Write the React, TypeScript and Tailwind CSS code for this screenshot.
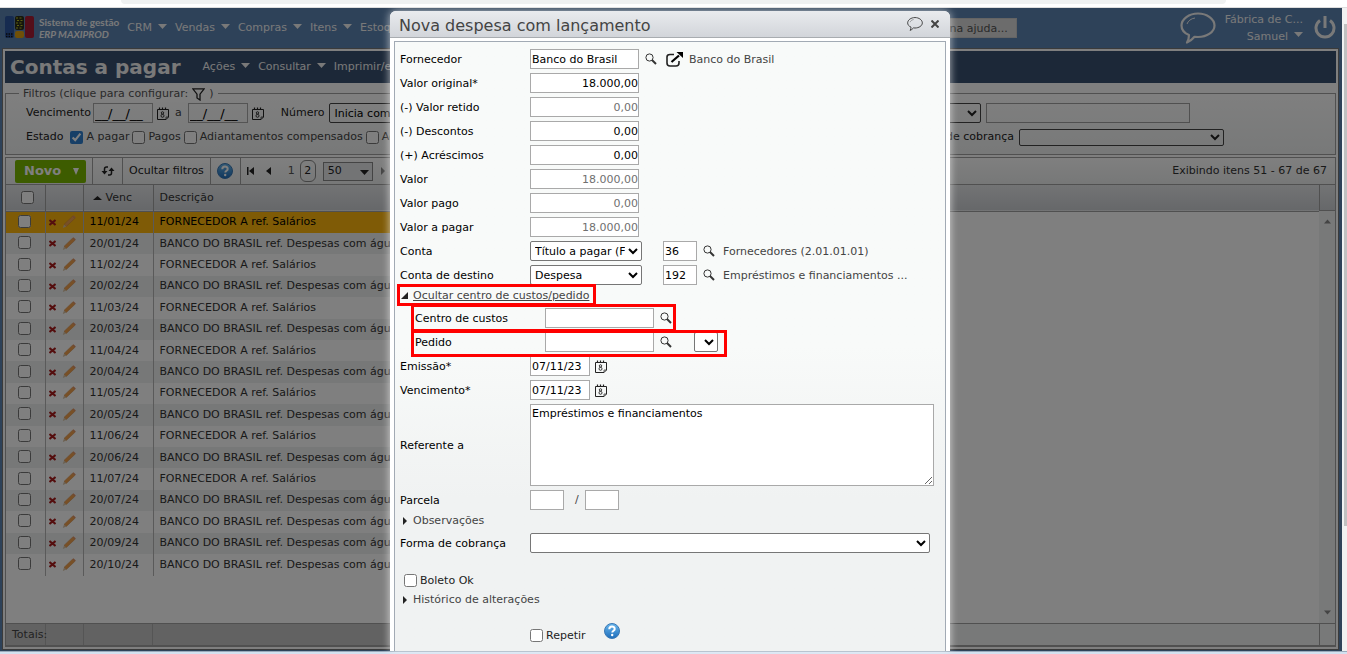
import {ReactNode} from 'react'
import clsx from 'clsx'

const rows = [
    {date: '11/01/24', text: 'FORNECEDOR A ref. Salários'},
    {date: '20/01/24', text: 'BANCO DO BRASIL ref. Despesas com água'},
    {date: '11/02/24', text: 'FORNECEDOR A ref. Salários'},
    {date: '20/02/24', text: 'BANCO DO BRASIL ref. Despesas com água'},
    {date: '11/03/24', text: 'FORNECEDOR A ref. Salários'},
    {date: '20/03/24', text: 'BANCO DO BRASIL ref. Despesas com água'},
    {date: '11/04/24', text: 'FORNECEDOR A ref. Salários'},
    {date: '20/04/24', text: 'BANCO DO BRASIL ref. Despesas com água'},
    {date: '11/05/24', text: 'FORNECEDOR A ref. Salários'},
    {date: '20/05/24', text: 'BANCO DO BRASIL ref. Despesas com água'},
    {date: '11/06/24', text: 'FORNECEDOR A ref. Salários'},
    {date: '20/06/24', text: 'BANCO DO BRASIL ref. Despesas com água'},
    {date: '11/07/24', text: 'FORNECEDOR A ref. Salários'},
    {date: '20/07/24', text: 'BANCO DO BRASIL ref. Despesas com água'},
    {date: '20/08/24', text: 'BANCO DO BRASIL ref. Despesas com água'},
    {date: '20/09/24', text: 'BANCO DO BRASIL ref. Despesas com água'},
    {date: '20/10/24', text: 'BANCO DO BRASIL ref. Despesas com água'},
]

const amounts = [
    {id: 'original', label: 'Valor original*', value: '18.000,00'},
    {id: 'retido', label: '(-) Valor retido', value: '0,00', disabled: true},
    {id: 'descontos', label: '(-) Descontos', value: '0,00'},
    {id: 'acrescimos', label: '(+) Acréscimos', value: '0,00'},
    {id: 'valor', label: 'Valor', value: '18.000,00', disabled: true},
    {id: 'pago', label: 'Valor pago', value: '0,00', disabled: true},
    {id: 'a-pagar', label: 'Valor a pagar', value: '18.000,00', disabled: true},
]

const inputClass = 'h-5 shrink-0 border border-[#a9a9a9] bg-white px-px text-black'
const selectClass = 'h-5 shrink-0 rounded-xs border border-[#767676] bg-white text-black'

function SearchIcon() {
    return (
        <svg width="12" height="12" viewBox="0 0 12 12" fill="none" aria-hidden="true">
            <circle cx="4.5" cy="4.5" r="3.6" stroke="#333" strokeWidth="1"/>
            <path d="M7 7l4 4" stroke="#333" strokeWidth="2"/>
        </svg>
    )
}

function CalendarIcon() {
    return (
        <svg width="12" height="13" viewBox="0 0 12 13" fill="none" stroke="#222" aria-hidden="true">
            <path d="M.5 2.500h11v7.500l-2.500 2.500H.5z"/>
            <path d="M2.500.5v2M5.500.5v2M8.500.5v2" strokeWidth="1.200"/>
            <path d="M9 12.500V10h2.500" strokeWidth=".7"/>
            <circle cx="5.500" cy="5.900" r="1.200" strokeWidth=".9"/>
            <circle cx="5.500" cy="8.800" r="1.500" strokeWidth=".9"/>
        </svg>
    )
}

function HelpIcon() {
    return (
        <svg width="16" height="16" viewBox="0 0 16 16" aria-hidden="true">
            <defs>
                <linearGradient id="help" x1="0" y1="0" x2="0" y2="1">
                    <stop offset="0" stopColor="#6ab8ee"/>
                    <stop offset="1" stopColor="#1d6cba"/>
                </linearGradient>
            </defs>
            <circle cx="8" cy="8" r="7.5" fill="url(#help)" stroke="#3a78b4"/>
            <path d="M5.300 6.200c0-3.400 5.400-3.400 5.400-.3 0 1.900-2.400 1.800-2.400 3.600" fill="none" stroke="#fff" strokeWidth="2"/>
            <circle cx="8.200" cy="12" r="1.200" fill="#fff"/>
        </svg>
    )
}

function BubbleIcon({className}: {className: string}) {
    return (
        <svg className={className} viewBox="0 0 36 32" fill="none" aria-hidden="true">
            <path d="M9 23C4 21 1.500 17.500 1.500 13.500 1.500 7 9 1.500 18 1.500s16.500 5.500 16.500 12S27 25 18 25l-3.500-.2Q11 29 7 30.500 9 27 9 23z"
                stroke="currentColor" strokeWidth="2.200" strokeLinejoin="round"/>
            <path d="M7 12c1-3 4-5.500 8-6" stroke="currentColor" strokeWidth="1"/>
        </svg>
    )
}

function Caret({className}: {className?: string}) {
    return (
        <svg className={className} width="9" height="5" viewBox="0 0 9 5" fill="currentColor" aria-hidden="true">
            <path d="M0 0h9L4.500 5z"/>
        </svg>
    )
}

function PencilIcon() {
    return (
        <svg width="14" height="14" viewBox="0 0 14 14" aria-hidden="true">
            <path d="M10.500 1.200l2.300 2.300-8.500 8L2 9.400z" fill="#f0a04c" stroke="#c88040" strokeWidth=".5"/>
            <path d="M2 9.400L.8 13l3.500-1.500z" fill="#d8c0a0"/>
            <path d="M10.500 1.200l1-.9 2.300 2.200-1 1z" fill="#e09060"/>
        </svg>
    )
}

function Logo() {
    return (
        <svg width="30" height="24" viewBox="0 0 30 24" aria-hidden="true">
            <rect x="0" y="0" width="9" height="22" rx="2" fill="#2c56a0"/>
            <path d="M1 18h7M1 20.500h7" stroke="#111" strokeWidth="1.500" strokeDasharray="1.500 1"/>
            <rect x="10" y="0" width="9" height="14" rx="2" fill="#2a2c18"/>
            <path d="M11 2h7M12 4.500h7M11 7h7M12 9.500h6M11 12h7" stroke="#b8c020" strokeWidth="1" strokeDasharray="2 1.500"/>
            <rect x="10" y="15" width="9" height="7" rx="2" fill="#e0a010"/>
            <rect x="20" y="0" width="9" height="22" rx="2" fill="#a81c34"/>
        </svg>
    )
}

function Menu({children}: {children: ReactNode}) {
    return (
        <button type="button" className="flex items-center gap-[6px] whitespace-nowrap">
            {children}
            <Caret className="mb-1"/>
        </button>
    )
}

function Check({label, checked}: {label: string, checked?: boolean}) {
    return (
        <label className="flex items-center gap-[3px] whitespace-nowrap text-[#444]">
            <input type="checkbox" defaultChecked={checked} className="size-[13px] accent-[#2f7fce]"/>
            {label}
        </label>
    )
}

function TopBar() {
    return (
        <header className="flex h-10 items-center bg-[#5c84b2] text-[#f2f2f2]">
            <a href="#" className="flex items-center gap-1 pl-[5px]">
                <Logo/>
                <span className="font-[Lato,sans-serif] text-[10px] font-bold leading-[12px] whitespace-nowrap">
                    Sistema de gestão<br/><i>ERP MAXIPROD</i>
                </span>
            </a>
            <nav className="ml-2 flex min-w-0 flex-1 gap-2 overflow-hidden">
                <Menu>CRM</Menu>
                <Menu>Vendas</Menu>
                <Menu>Compras</Menu>
                <Menu>Itens</Menu>
                <Menu>Estoq</Menu>
            </nav>
            <input aria-label="Pesquisar na ajuda" placeholder="Pesquisar na ajuda..."
                className="h-5 w-[150px] border border-[#c8c8c8] bg-[#d8d8d8] pr-2 text-right placeholder:text-[#555]"/>
            <button type="button" aria-label="Mensagens" className="ml-[163px]">
                <BubbleIcon className="h-8 w-9"/>
            </button>
            <div className="ml-[9px] text-right leading-[17px]">
                <div>Fábrica de C...</div>
                <button type="button" className="inline-flex items-center gap-[6px]">Samuel <Caret className="mb-1"/></button>
            </div>
            <button type="button" aria-label="Sair" className="mr-[6px] ml-[11px]">
                <svg width="22" height="24" viewBox="0 0 22 24" fill="none" stroke="currentColor" strokeWidth="3" aria-hidden="true">
                    <path d="M6 4.500a9 9 0 1 0 10 0M11 0v12"/>
                </svg>
            </button>
        </header>
    )
}

function DateFilter({label}: {label: string}) {
    return (
        <>
            <input aria-label={label} defaultValue="__/__/__"
                className="h-5 w-[60px] border border-[#a9a9a9] bg-transparent px-px text-[13px] text-black"/>
            <button type="button" aria-label="Calendário" className="ml-1"><CalendarIcon/></button>
        </>
    )
}

function Filters() {
    return (
        <section className="pt-[10px] pb-[2px]">
            <div className="relative border border-[#a0a0a0] bg-linear-to-b from-white to-[#f0f2f2] pt-[9px] pb-[7px] pl-5">
                <button type="button" className="absolute -top-2 left-[13px] flex h-4 items-center bg-white px-1 whitespace-nowrap text-[#555]">
                    Filtros (clique para configurar:
                    <svg className="mx-1" width="13" height="13" viewBox="0 0 13 13" fill="none" stroke="#222" strokeWidth="1.300" aria-hidden="true">
                        <path d="M.8.8h11.400L8 6.200V12L5 10V6.200z"/>
                    </svg>
                    )
                </button>
                <div className="flex h-5 items-center">
                    <span className="mr-[2px]">Vencimento</span>
                    <DateFilter label="Vencimento de"/>
                    <span className="mx-[6px] text-[#444]">a</span>
                    <DateFilter label="Vencimento até"/>
                    <label htmlFor="numero" className="mr-[5px] ml-[17px]">Número</label>
                    <select id="numero" className="h-5 w-[120px] rounded-xs border border-[#444] bg-transparent text-black">
                        <option>Inicia com</option>
                    </select>
                    <span className="flex-1"/>
                    <select aria-label="Operador" className="h-5 w-[120px] rounded-xs border border-[#444] bg-transparent"/>
                    <input aria-label="Valor do filtro" className="mr-[145px] ml-[5px] h-5 w-[204px] border border-[#a0a0a0]"/>
                </div>
                <div className="mt-1 flex h-5 items-center gap-[3px]">
                    <span className="mr-1">Estado</span>
                    <Check label="A pagar" checked/>
                    <Check label="Pagos"/>
                    <Check label="Adiantamentos compensados"/>
                    <Check label="Ag"/>
                    <span className="flex-1"/>
                    <label htmlFor="forma-filtro" className="mr-[2px] whitespace-nowrap">Forma de cobrança</label>
                    <select id="forma-filtro" className="mr-[111px] h-[17px] w-[205px] rounded-xs border border-[#444] bg-transparent"/>
                </div>
            </div>
        </section>
    )
}

function Toolbar() {
    return (
        <div className="flex h-7 shrink-0 items-center border border-[#a0a0a0] bg-linear-to-b from-white to-[#eef0f0] pr-2">
            <button type="button" className="ml-[9px] flex h-[23px] w-[71px] items-center justify-between rounded-xs bg-[#7ab800] pr-[7px] pl-[9px] text-[13px] font-bold text-white">
                Novo
                <svg width="6" height="7" viewBox="0 0 6 7" fill="currentColor" aria-hidden="true"><path d="M0 0h6L3 7z"/></svg>
            </button>
            <button type="button" aria-label="Atualizar" className="ml-[6px] flex h-full w-[31px] items-center justify-center border-x border-[#a0a0a0]">
                <svg width="14" height="10" viewBox="0 0 14 10" fill="none" aria-hidden="true">
                    <path d="M7 1H5.500Q3.500 1 3.500 3v3M7 9h1.500q2 0 2-2V4" stroke="#222" strokeWidth="1.500"/>
                    <path d="M.5 5h6L3.500 8.500zM7.500 5h6L10.500 1.500z" fill="#222"/>
                </svg>
            </button>
            <button type="button" className="h-full border-r border-[#a0a0a0] px-[6px] whitespace-nowrap text-[#222]">Ocultar filtros</button>
            <button type="button" aria-label="Ajuda" className="flex h-full w-[30px] items-center justify-center border-r border-[#a0a0a0]">
                <HelpIcon/>
            </button>
            <button type="button" aria-label="Primeira página" className="ml-[6px]">
                <svg width="7" height="8" viewBox="0 0 7 8" fill="#222" aria-hidden="true"><path d="M0 0h1.500v8H0zM7 0v8L2 4z"/></svg>
            </button>
            <button type="button" aria-label="Página anterior" className="ml-3">
                <svg width="5" height="8" viewBox="0 0 5 8" fill="#222" aria-hidden="true"><path d="M5 0v8L0 4z"/></svg>
            </button>
            <button type="button" className="ml-[17px] text-[#555]">1</button>
            <button type="button" className="ml-[5px] h-[22px] w-4 rounded-md border border-[#888]">2</button>
            <div className="relative ml-[7px]">
                <select aria-label="Itens por página" className="block h-[19px] w-[50px] appearance-none border border-[#888] bg-[#e6e8ea] pl-1">
                    <option>50</option>
                </select>
                <Caret className="pointer-events-none absolute top-2 right-1"/>
            </div>
            <button type="button" aria-label="Próxima página" className="ml-2">
                <svg width="4" height="8" viewBox="0 0 4 8" fill="#888" aria-hidden="true"><path d="M0 0v8l4-4z"/></svg>
            </button>
            <span className="ml-auto whitespace-nowrap text-[#333]">Exibindo itens 51 - 67 de 67</span>
        </div>
    )
}

function Grid() {
    return (
        <div className="flex min-h-0 flex-1 flex-col border-x border-[#a0a0a0]">
            <div className="flex min-h-0 flex-1">
                <div className="min-w-0 flex-1 overflow-hidden">
                    <table className="w-full table-fixed border-collapse text-left text-[#333]">
                        <colgroup>
                            <col className="w-[39px]"/>
                            <col className="w-[38px]"/>
                            <col className="w-[70px]"/>
                            <col/>
                        </colgroup>
                        <thead>
                            <tr className="h-[26px] border-b border-[#a0a0a0] bg-linear-to-b from-[#e6e8ea] to-[#cdd0d4]">
                                <th className="border-r border-[#a0a0a0] pl-[5px] text-center">
                                    <input type="checkbox" aria-label="Selecionar todos" className="mx-auto block size-[13px]"/>
                                </th>
                                <th className="border-r border-[#a0a0a0]"/>
                                <th className="border-r border-[#a0a0a0] pl-[9px] font-normal">
                                    <span className="flex items-center gap-1">
                                        <svg width="9" height="4" viewBox="0 0 9 4" fill="#222" aria-hidden="true"><path d="M0 4h9L4.500 0z"/></svg>
                                        Venc
                                    </span>
                                </th>
                                <th className="pl-[6px] font-normal">Descrição</th>
                            </tr>
                        </thead>
                    </table>
                    <table className="h-[364px] w-3/5 table-fixed border-collapse text-left text-[#333]">
                        <colgroup>
                            <col className="w-[39px]"/>
                            <col className="w-[38px]"/>
                            <col className="w-[70px]"/>
                            <col/>
                        </colgroup>
                        <tbody>
                            {rows.map((row, i) => (
                                <tr key={row.date}
                                    className={clsx('whitespace-nowrap', i === 0 ? 'bg-[#ffb70c] text-black' : i % 2 ? 'bg-[#eff1f1]' : 'bg-white')}>
                                    <td className="border-r border-[#b4b4b4] pr-[2px] pb-[2px]">
                                        <input type="checkbox" aria-label={'Selecionar ' + row.date} className="mx-auto block size-[13px]"/>
                                    </td>
                                    <td className="border-r border-[#b4b4b4]">
                                        <div className="flex items-center gap-[6px] pl-[3px]">
                                            <button type="button" aria-label="Excluir">
                                                <svg width="7" height="7" viewBox="0 0 7 7" stroke="#a81c1c" strokeWidth="2" aria-hidden="true">
                                                    <path d="M.5 1l6 5M6.500 1l-6 5"/>
                                                </svg>
                                            </button>
                                            <button type="button" aria-label="Editar"><PencilIcon/></button>
                                        </div>
                                    </td>
                                    <td className="border-r border-[#b4b4b4] pl-[6px]">{row.date}</td>
                                    <td className="pl-[6px]">{row.text}</td>
                                </tr>
                            ))}
                        </tbody>
                    </table>
                </div>
                <div className="flex w-4 flex-col">
                    <div className="h-[26px] border-b border-l border-[#a0a0a0] bg-linear-to-b from-[#e6e8ea] to-[#cdd0d4]"/>
                    <div className="flex flex-1 flex-col items-center justify-between bg-[#f0f2f2] py-2 text-[#888]">
                        <Caret className="w-[7px] rotate-180"/>
                        <Caret className="w-[7px]"/>
                    </div>
                </div>
            </div>
            <div className="flex h-[22px] shrink-0 items-center border-t border-[#a0a0a0] bg-[#c4c4c4]">
                <span className="relative z-10 w-[39px] pl-[6px] whitespace-nowrap">Totais:</span>
                <span className="h-full w-[38px] border-l border-[#aaa]"/>
                <span className="h-full w-[70px] border-x border-[#aaa]"/>
                <span className="h-full flex-1"/>
                <span className="h-full w-2/5 bg-[#f0f2f2]"/>
                <span className="h-full w-4 border-l border-[#a0a0a0] bg-[#f0f2f2]"/>
            </div>
            <div className="h-[2px] shrink-0 bg-[#a0a0a0]"/>
        </div>
    )
}

function Field({label, htmlFor, children, className}: {label: string, htmlFor: string, children: ReactNode, className?: string}) {
    return (
        <div className={clsx('flex items-center', className || 'h-6')}>
            <label htmlFor={htmlFor} className="w-[130px] shrink-0 pt-px text-black">{label}</label>
            {children}
        </div>
    )
}

function Lookup() {
    return <button type="button" aria-label="Pesquisar" className="ml-[6px] shrink-0"><SearchIcon/></button>
}

function Toggle({children}: {children: ReactNode}) {
    return (
        <button type="button" className="flex h-4 items-center gap-[6px] pt-px pl-[3px]">
            <svg width="4" height="8" viewBox="0 0 4 8" fill="#222" aria-hidden="true"><path d="M0 0v8l4-4z"/></svg>
            {children}
        </button>
    )
}

function ExpenseDialog() {
    return (
        <div role="dialog" aria-labelledby="dialog-title"
            className="flex h-full w-[560px] flex-col rounded-t-md bg-white text-[#444] shadow-[0_0_9px_#ffffffb0]">
            <div className="flex h-[27px] shrink-0 items-center rounded-t-md border-b border-[#a8acb0] bg-linear-to-b from-[#e9ebee] to-[#d2d5da] px-[9px]">
                <h2 id="dialog-title" className="mr-auto pt-1 text-base">Nova despesa com lançamento</h2>
                <button type="button" aria-label="Comentários"><BubbleIcon className="h-4 w-4"/></button>
                <button type="button" aria-label="Fechar" className="mr-[2px] ml-2">
                    <svg width="8" height="8" viewBox="0 0 8 8" stroke="#444" strokeWidth="2" aria-hidden="true"><path d="M.5.5l7 7M7.500.5l-7 7"/></svg>
                </button>
            </div>
            <form className="mx-1 mt-[3px] min-h-0 flex-1 overflow-hidden border border-b-0 border-[#a2aab4] bg-linear-to-b from-[#f8faf9] from-50% to-[#f0f2f2] to-75% px-[5px] pt-[5px]">
                <Field label="Fornecedor" htmlFor="fornecedor">
                    <input id="fornecedor" defaultValue="Banco do Brasil" className={clsx(inputClass, 'w-[109px]')}/>
                    <Lookup/>
                    <button type="button" aria-label="Abrir fornecedor" className="mr-[6px] ml-[9px]">
                        <svg width="17" height="15" viewBox="0 0 17 15" fill="none" aria-hidden="true">
                            <path d="M8 2.500H4Q1 2.500 1 5v6q0 3 3 3h6q3 0 3-3V9" stroke="#222" strokeWidth="1.600"/>
                            <path d="M5.500 10L13 3.500" stroke="#000" strokeWidth="2.200"/>
                            <path d="M10.500 0H17v6z" fill="#000"/>
                        </svg>
                    </button>
                    <span className="pt-px">Banco do Brasil</span>
                </Field>
                {amounts.map(amount => (
                    <Field key={amount.id} label={amount.label} htmlFor={amount.id}>
                        <input id={amount.id} defaultValue={amount.value} readOnly={amount.disabled}
                            className={clsx('h-5 w-[109px] border border-[#a9a9a9] bg-white text-right', amount.disabled ? 'text-[#707070]' : 'text-black')}/>
                    </Field>
                ))}
                <Field label="Conta" htmlFor="conta">
                    <select id="conta" className={clsx(selectClass, 'w-[112px]')}>
                        <option>Título a pagar (Fornecedores)</option>
                    </select>
                    <input aria-label="Código da conta" defaultValue="36" className={clsx(inputClass, 'ml-[21px] w-[34px]')}/>
                    <Lookup/>
                    <span className="ml-2 pt-px">Fornecedores (2.01.01.01)</span>
                </Field>
                <Field label="Conta de destino" htmlFor="destino">
                    <select id="destino" className={clsx(selectClass, 'w-[112px]')}>
                        <option>Despesa</option>
                    </select>
                    <input aria-label="Código da conta de destino" defaultValue="192" className={clsx(inputClass, 'ml-[21px] w-[34px]')}/>
                    <Lookup/>
                    <span className="ml-2 pt-px">Empréstimos e financiamentos ...</span>
                </Field>
                <div className="relative flex h-[19px] w-[193px] items-start">
                    <button type="button" className="flex h-4 items-center gap-[5px] pt-px pl-px whitespace-nowrap underline">
                        <svg width="7" height="7" viewBox="0 0 7 7" fill="#222" aria-hidden="true"><path d="M7 0v7H0z"/></svg>
                        Ocultar centro de custos/pedido
                    </button>
                    <div className="pointer-events-none absolute -inset-x-[3px] -top-[3px] bottom-0 border-3 border-[#f00]"/>
                </div>
                <div className="relative ml-[15px] h-6 w-[261px]">
                    <Field label="Centro de custos" htmlFor="centro">
                        <input id="centro" className={clsx(inputClass, 'w-[109px]')}/>
                        <Lookup/>
                    </Field>
                    <div className="pointer-events-none absolute -inset-y-[2px] right-0 -left-1 border-3 border-[#f00]"/>
                </div>
                <div className="relative ml-[15px] h-6 w-[312px]">
                    <Field label="Pedido" htmlFor="pedido">
                        <input id="pedido" className={clsx(inputClass, 'w-[109px]')}/>
                        <Lookup/>
                        <select aria-label="Item do pedido" className={clsx(selectClass, 'ml-[22px] w-6')}/>
                    </Field>
                    <div className="pointer-events-none absolute top-0 right-0 -bottom-[3px] -left-1 border-3 border-[#f00]"/>
                </div>
                <Field label="Emissão*" htmlFor="emissao">
                    <input id="emissao" defaultValue="07/11/23" className={clsx(inputClass, 'w-[60px]')}/>
                    <button type="button" aria-label="Calendário" className="ml-[5px]"><CalendarIcon/></button>
                </Field>
                <Field label="Vencimento*" htmlFor="vencimento">
                    <input id="vencimento" defaultValue="07/11/23" className={clsx(inputClass, 'w-[60px]')}/>
                    <button type="button" aria-label="Calendário" className="ml-[5px]"><CalendarIcon/></button>
                </Field>
                <Field label="Referente a" htmlFor="referente" className="h-[86px]">
                    <textarea id="referente" defaultValue="Empréstimos e financiamentos"
                        className="h-[82px] w-[404px] resize border border-[#a9a9a9] bg-white px-px py-[2px] text-black"/>
                </Field>
                <Field label="Parcela" htmlFor="parcela">
                    <input id="parcela" className={clsx(inputClass, 'w-[34px]')}/>
                    <span className="mr-[6px] ml-[11px]">/</span>
                    <input aria-label="Total de parcelas" className={clsx(inputClass, 'w-[34px]')}/>
                </Field>
                <Toggle>Observações</Toggle>
                <Field label="Forma de cobrança" htmlFor="forma" className="mt-[3px] h-6">
                    <select id="forma" className={clsx(selectClass, 'w-[400px]')}/>
                </Field>
                <label className="mt-[15px] flex h-5 items-center gap-[3px] pl-1 text-[#222]">
                    <input type="checkbox" className="size-[13px]"/>
                    <span className="pt-px">Boleto Ok</span>
                </label>
                <div className="mt-px"><Toggle>Histórico de alterações</Toggle></div>
                <div className="mt-4 flex h-6 items-center pl-[130px] text-[#222]">
                    <label className="flex items-center gap-[3px]">
                        <input type="checkbox" className="size-[13px]"/>
                        <span className="pt-px">Repetir</span>
                    </label>
                    <button type="button" aria-label="Ajuda" className="mb-2 ml-[18px]"><HelpIcon/></button>
                </div>
            </form>
        </div>
    )
}

export default function App() {
    return (
        <div className="flex h-screen flex-col overflow-hidden bg-white font-['DejaVu_Sans',Verdana,sans-serif] text-[11px] leading-[14px] text-[#222]">
            <div className="h-2 shrink-0 border-b border-[#ddd] px-[9%]">
                <div className="h-1 rounded-b-full bg-[#eff1f1]"/>
            </div>
            <div className="flex min-h-0 flex-1">
                <div className="relative flex min-w-0 flex-1 flex-col bg-[#5c84b2]">
                    <TopBar/>
                    <main className="mr-[3px] mb-px ml-[2px] flex min-h-0 flex-1 flex-col border border-[#777] bg-white p-[2px]">
                        <div className="flex h-8 shrink-0 items-center bg-[#385070] pl-[5px] text-[#f2f2f2]">
                            <h1 className="mr-[22px] text-xl font-bold whitespace-nowrap">Contas a pagar</h1>
                            <div className="flex gap-2">
                                <Menu>Ações</Menu>
                                <Menu>Consultar</Menu>
                                <span className="whitespace-nowrap">Imprimir/e</span>
                            </div>
                        </div>
                        <Filters/>
                        <Toolbar/>
                        <Grid/>
                    </main>
                    <div className="absolute inset-0 flex justify-center bg-black/50 pt-[3px] pr-[2px]">
                        <ExpenseDialog/>
                    </div>
                </div>
                <div className="w-[5px] bg-[#f1f1f1] pt-4 pl-[2px]">
                    <div className="h-4/5 bg-[#c1c1c1]"/>
                </div>
            </div>
            <div className="h-[3px] shrink-0 border-t border-[#9aaabb] bg-[#d3e1f0]"/>
        </div>
    )
}
